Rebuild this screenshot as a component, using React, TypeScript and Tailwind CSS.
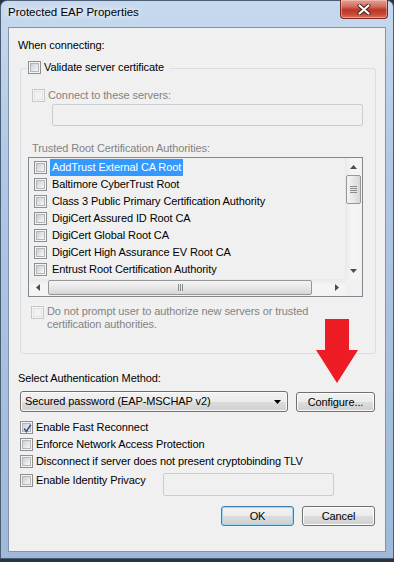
import React from "react";

type CheckProps = { checked?: boolean; disabled?: boolean };

const CheckBox: React.FC<CheckProps> = ({ checked = false, disabled = false }) => {
  return (
    <span
      className={`relative flex h-[13px] w-[13px] shrink-0 items-center justify-center border bg-[#f4f4f4] ${
        disabled ? "border-[#c8c8c8]" : "border-[#8e8f8f]"
      }`}
    >
      <span
        className={`h-[9px] w-[9px] border ${
          disabled
            ? "border-[#e2e2e2] bg-[#f2f2f2]"
            : "border-[#b3b6ba] bg-[linear-gradient(135deg,#cbcfd4,#f7f7f7)]"
        }`}
      />
      {checked && (
        <svg className="absolute left-[1px] top-[1px]" width="11" height="11" viewBox="0 0 11 11">
          <path d="M2.2 5.4 L4.4 8.4 L8.8 1.8" fill="none" stroke="#3f5b8c" strokeWidth="1.7" />
        </svg>
      )}
    </span>
  );
};

const btnBg =
  "bg-[linear-gradient(to_bottom,#f2f2f2_0%,#ebebeb_50%,#dddddd_51%,#cfcfcf_100%)] shadow-[inset_0_0_0_1px_#fbfbfb]";

const CloseButton: React.FC = () => (
  <div className="-mr-[2px] -mt-[1px] flex h-[19px] w-[48px] items-center justify-center rounded-b-[4px] border border-t-0 border-[#7b2a22] bg-[linear-gradient(to_bottom,#e3a196_0%,#d46f62_35%,#b93626_55%,#c9493a_80%,#d9735f_100%)] shadow-[inset_0_0_0_1px_rgba(255,210,200,0.45)]">
    <svg width="14" height="11" viewBox="0 0 14 11">
      <path d="M2.5 1.5 L11.5 9.5 M11.5 1.5 L2.5 9.5" stroke="#4a1a14" strokeWidth="4" strokeLinecap="round" />
      <path d="M2.5 1.5 L11.5 9.5 M11.5 1.5 L2.5 9.5" stroke="#ffffff" strokeWidth="2.2" strokeLinecap="round" />
    </svg>
  </div>
);

const certs = [
  "AddTrust External CA Root",
  "Baltimore CyberTrust Root",
  "Class 3 Public Primary Certification Authority",
  "DigiCert Assured ID Root CA",
  "DigiCert Global Root CA",
  "DigiCert High Assurance EV Root CA",
  "Entrust Root Certification Authority",
];

const VScroll: React.FC = () => (
  <div className="flex w-[17px] flex-col bg-[linear-gradient(to_right,#e9e9e9,#f5f5f5_40%,#f3f3f3)]">
    <div className="flex h-[17px] items-center justify-center">
      <svg width="7" height="4" viewBox="0 0 7 4">
        <path d="M0 4 L3.5 0 L7 4 Z" fill="#4d4d4d" />
      </svg>
    </div>
    <div className="mx-[1px] flex h-[29px] flex-col items-center justify-center gap-[1px] rounded-[2px] border border-[#979797] bg-[linear-gradient(to_right,#f4f4f4,#e8e8e8_50%,#d6d6d6)]">
      <span className="h-[1px] w-[7px] bg-[#8a8a8a]" />
      <span className="h-[1px] w-[7px] bg-[#8a8a8a]" />
      <span className="h-[1px] w-[7px] bg-[#8a8a8a]" />
      <span className="h-[1px] w-[7px] bg-[#8a8a8a]" />
    </div>
    <div className="flex-1" />
    <div className="flex h-[17px] items-center justify-center">
      <svg width="7" height="4" viewBox="0 0 7 4">
        <path d="M0 0 L3.5 4 L7 0 Z" fill="#4d4d4d" />
      </svg>
    </div>
  </div>
);

const HScroll: React.FC = () => (
  <div className="flex flex-1 items-center bg-[linear-gradient(to_bottom,#e9e9e9,#f5f5f5_40%,#f3f3f3)]">
    <div className="flex h-[17px] w-[17px] items-center justify-center">
      <svg width="4" height="7" viewBox="0 0 4 7">
        <path d="M4 0 L0 3.5 L4 7 Z" fill="#4d4d4d" />
      </svg>
    </div>
    <div className="my-[1px] ml-[2px] flex h-[15px] w-[264px] items-center justify-center gap-[1px] rounded-[2px] border border-[#979797] bg-[linear-gradient(to_bottom,#f4f4f4,#e8e8e8_50%,#d6d6d6)]">
      <span className="h-[7px] w-[1px] bg-[#8a8a8a]" />
      <span className="h-[7px] w-[1px] bg-[#8a8a8a]" />
      <span className="h-[7px] w-[1px] bg-[#8a8a8a]" />
    </div>
    <div className="flex-1" />
    <div className="flex h-[17px] w-[17px] items-center justify-center">
      <svg width="4" height="7" viewBox="0 0 4 7">
        <path d="M0 0 L4 3.5 L0 7 Z" fill="#4d4d4d" />
      </svg>
    </div>
  </div>
);

export default function App() {
  return (
    <div className="relative h-[562px] w-[394px] overflow-hidden bg-[#2a3441] font-['Liberation_Sans',Arial,sans-serif] text-[11px] text-black">
      <div className="flex h-[559px] w-[394px] flex-col rounded-t-[7px] border border-[#4b5e76] bg-[linear-gradient(to_bottom,#c6d9ee,#b0c8e4_30%,#9fb9da)] px-[7px] pb-[6px]">
        {/* title bar */}
        <div className="flex h-[26px] shrink-0 items-start justify-between">
          <div className="mt-[3px] h-[16px] text-[11.5px] leading-[16px] [text-shadow:0_0_6px_#ffffff,0_0_10px_#ffffff]">
            Protected EAP Properties
          </div>
          <CloseButton />
        </div>

        {/* client area */}
        <div className="flex flex-1 flex-col border border-[#8094ab] bg-[#f0f0f0] pl-[9px] pr-[9px] pt-[9px] tracking-[-0.1px]">
          <div className="h-[16px] leading-[16px]">When connecting:</div>

          {/* group box */}
          <div className="relative ml-[2px] mt-[15px] h-[286px] rounded-[3px] border border-[#d5dfe5] pl-[7px] pr-[12px]">
            <div className="absolute left-[6px] top-[-10px] flex h-[16px] items-center gap-[3px] bg-[#f0f0f0] pl-[1px] pr-[5px]">
              <CheckBox />
              <span className="leading-[16px]">Validate server certificate</span>
            </div>

            <div className="ml-[4px] mt-[18px] flex h-[16px] items-center gap-[3px] text-[#838383]">
              <CheckBox disabled />
              <span>Connect to these servers:</span>
            </div>
            <div className="ml-[24px] mt-[1px] h-[22px] w-[311px] rounded-[2px] border border-[#c9cdd2] bg-[#f0f0f0]" />

            <div className="ml-[4px] mt-[14px] h-[16px] leading-[16px] text-[#838383]">
              Trusted Root Certification Authorities:
            </div>

            {/* list */}
            <div className="mt-[1px] flex h-[140px] w-[335px] flex-col border border-[#828790] bg-[#f0f0f0]">
              <div className="flex min-h-0 flex-1">
                <div className="flex-1 pt-[1px]">
                  {certs.map((c, i) => (
                    <div key={c} className="flex h-[17px] items-center pl-[5px]">
                      <CheckBox />
                      <span
                        className={`ml-[3px] h-[17px] px-[2px] leading-[17px] ${
                          i === 0 ? "bg-[#3399ff] text-white" : ""
                        }`}
                      >
                        {c}
                      </span>
                    </div>
                  ))}
                </div>
                <VScroll />
              </div>
              <div className="flex h-[17px]">
                <HScroll />
                <div className="w-[17px] bg-[#f0f0f0]" />
              </div>
            </div>

            <div className="ml-[3px] mt-[8px] flex items-start gap-[3px] text-[#838383]">
              <span className="mt-[1px]">
                <CheckBox disabled />
              </span>
              <span className="leading-[13px]">
                Do not prompt user to authorize new servers or trusted
                <br />
                certification authorities.
              </span>
            </div>
          </div>

          <div className="mt-[16px] h-[16px] leading-[16px]">Select Authentication Method:</div>

          <div className="ml-[2px] mt-[5px] flex items-start gap-[8px]">
            <div
              className={`flex h-[21px] w-[268px] items-center justify-between rounded-[3px] border border-[#707070] pl-[4px] pr-[6px] ${btnBg}`}
            >
              <span>Secured password (EAP-MSCHAP v2)</span>
              <svg width="7" height="4" viewBox="0 0 7 4">
                <path d="M0 0 L3.5 4 L7 0 Z" fill="#000000" />
              </svg>
            </div>
            <div
              className={`mt-[1px] flex h-[20px] w-[79px] items-center justify-center rounded-[3px] border border-[#707070] ${btnBg}`}
            >
              Configure...
            </div>
          </div>

          <div className="ml-[2px] mt-[7px] flex flex-col">
            <div className="flex h-[17px] items-center gap-[3px]">
              <CheckBox checked />
              <span>Enable Fast Reconnect</span>
            </div>
            <div className="flex h-[17px] items-center gap-[3px]">
              <CheckBox />
              <span>Enforce Network Access Protection</span>
            </div>
            <div className="flex h-[17px] items-center gap-[3px]">
              <CheckBox />
              <span>Disconnect if server does not present cryptobinding TLV</span>
            </div>
            <div className="mt-[2px] flex items-start">
              <div className="flex h-[17px] w-[143px] items-center gap-[3px]">
                <CheckBox />
                <span>Enable Identity Privacy</span>
              </div>
              <div className="mt-[1px] h-[23px] w-[171px] rounded-[2px] border border-[#c9cdd2] bg-[#f0f0f0]" />
            </div>
          </div>

          <div className="mr-[1px] mt-[10px] flex justify-end gap-[8px]">
            <div className="flex h-[20px] w-[73px] items-center justify-center rounded-[3px] border border-[#3c7fb1] bg-[linear-gradient(to_bottom,#f2f2f2_0%,#ebebeb_50%,#dddddd_51%,#cfcfcf_100%)] shadow-[inset_0_0_0_1px_#9fd5f3]">
              OK
            </div>
            <div
              className={`flex h-[20px] w-[73px] items-center justify-center rounded-[3px] border border-[#707070] ${btnBg}`}
            >
              Cancel
            </div>
          </div>
        </div>
      </div>

      {/* red annotation arrow */}
      <svg className="absolute left-[316px] top-[319px]" width="43" height="65" viewBox="0 0 43 65">
        <polygon points="9,0 33,0 33,31 42,31 21,64 0,31 9,31" fill="#ed1c24" />
      </svg>
    </div>
  );
}
